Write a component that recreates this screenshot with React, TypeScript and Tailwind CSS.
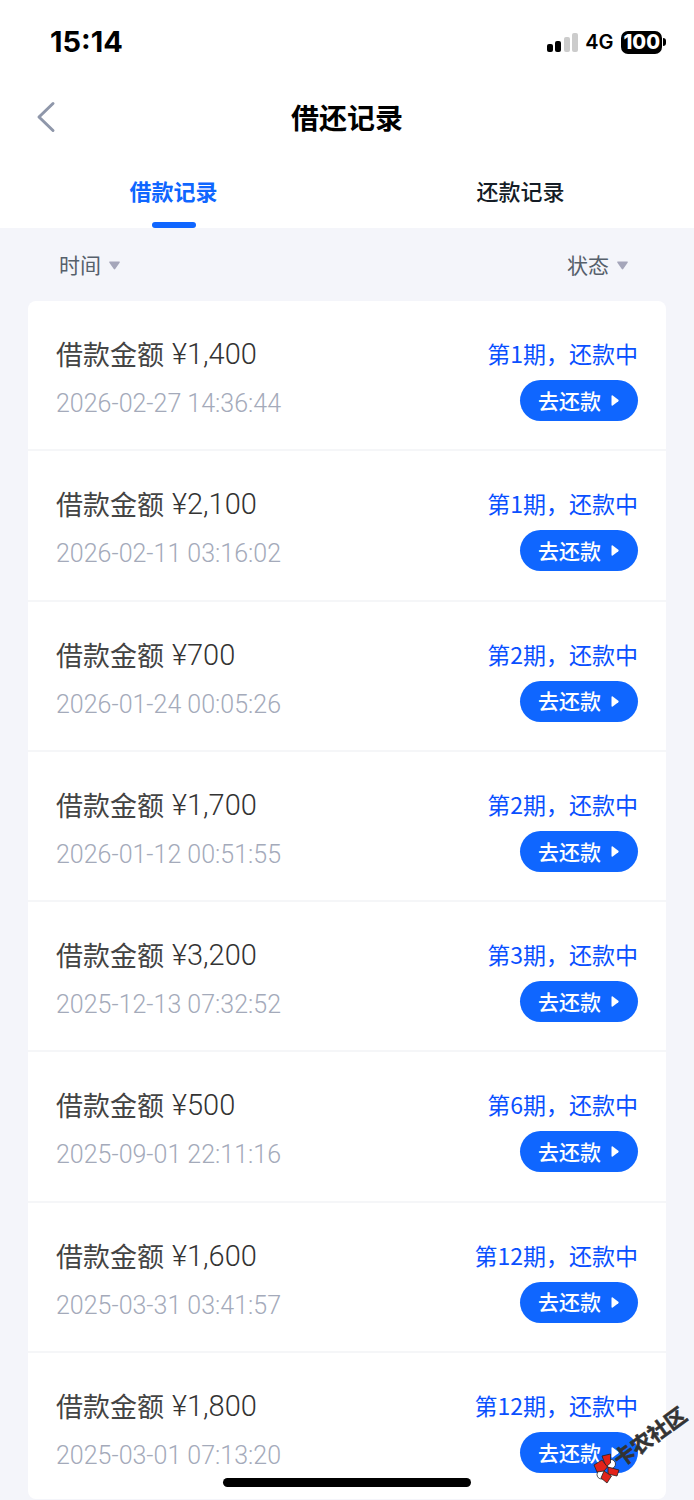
import React from "react";

type LoanRecord = {
  amount: string;
  time: string;
  period: number;
};

const records: LoanRecord[] = [
  { amount: "1,400", time: "2026-02-27 14:36:44", period: 1 },
  { amount: "2,100", time: "2026-02-11 03:16:02", period: 1 },
  { amount: "700", time: "2026-01-24 00:05:26", period: 2 },
  { amount: "1,700", time: "2026-01-12 00:51:55", period: 2 },
  { amount: "3,200", time: "2025-12-13 07:32:52", period: 3 },
  { amount: "500", time: "2025-09-01 22:11:16", period: 6 },
  { amount: "1,600", time: "2025-03-31 03:41:57", period: 12 },
  { amount: "1,800", time: "2025-03-01 07:13:20", period: 12 },
];

const StatusBar: React.FC = () => {
  return (
    <div className="flex h-[84px] items-center justify-between pr-7 pl-[50px] font-['Inter',sans-serif] text-black">
      <span className="text-[29px] font-bold">15:14</span>
      <div className="flex items-center">
        <svg width="32" height="20" viewBox="0 0 32 20" aria-hidden="true">
          <rect x="0" y="12" width="6" height="8" rx="2" fill="#000" />
          <rect x="8" y="9" width="6" height="11" rx="2" fill="#000" />
          <rect x="17" y="5" width="6" height="15" rx="2" fill="#ccc" />
          <rect x="25" y="1" width="6" height="19" rx="2" fill="#ccc" />
        </svg>
        <span className="ml-1.5 text-xl font-semibold">4G</span>
        <span className="ml-2 rounded-[7px] bg-black px-0.5 text-xl leading-[23px] font-extrabold text-white">100</span>
        <span className="ml-px h-2 w-[3px] rounded-r-full bg-black" />
      </div>
    </div>
  );
};

const Header: React.FC = () => {
  return (
    <header className="grid h-[66px] grid-cols-[1fr_auto_1fr] items-center px-7">
      <button type="button" aria-label="返回" className="flex h-11 w-9 items-center pl-2">
        <svg width="20" height="32" viewBox="0 0 20 32" fill="none" aria-hidden="true">
          <path d="M17 2.500 3 16l14 13.500" stroke="#8f97aa" strokeWidth="3" strokeLinecap="round" strokeLinejoin="round" />
        </svg>
      </button>
      <h1 className="text-[28px] font-bold text-black">借还记录</h1>
    </header>
  );
};

const Tabs: React.FC = () => {
  return (
    <div role="tablist" className="grid h-[78px] grid-cols-2 text-[22px]">
      <button type="button" role="tab" aria-selected="true" className="flex flex-col items-center justify-between pt-6 font-bold text-[#0f66ff]">
        <span className="leading-8">借款记录</span>
        <span className="h-1.5 w-11 rounded-full bg-[#0f66ff]" />
      </button>
      <button type="button" role="tab" aria-selected="false" className="flex flex-col items-center pt-6 font-medium text-[#141c26]">
        <span className="leading-8">还款记录</span>
      </button>
    </div>
  );
};

const FilterButton: React.FC<{ label: string }> = ({ label }) => {
  return (
    <button type="button" className="flex items-center gap-2 text-[21px] text-[#56606b]">
      {label}
      <svg className="mt-0.5" width="11" height="9" viewBox="0 0 11 9" aria-hidden="true">
        <path d="M1 .5h9c.8 0 1 .6.6 1.200L6.200 8c-.4.600-1 .600-1.400 0L.4 1.700C0 1.100.2.500 1 .500Z" fill="#a5a6ba" />
      </svg>
    </button>
  );
};

const RecordRow: React.FC<{ record: LoanRecord }> = ({ record }) => {
  return (
    <li className="flex flex-1 items-start justify-between border-b-2 border-[#f5f6f8] px-7 pt-[35px] pb-[27px] last:flex-none last:border-b-0 last:pb-[26px]">
      <div>
        <p className="flex items-center gap-2 text-[27px] leading-9 text-[#444]">
          <span>借款金额</span>
          <span className="font-['Roboto','Noto_Sans_CJK_SC',sans-serif] text-[29px] font-light text-[#333]">¥{record.amount}</span>
        </p>
        <time className="mt-4 block font-['Roboto',sans-serif] text-[25px] leading-8 font-light text-[#a4aaba]">{record.time}</time>
      </div>
      <div className="flex flex-col items-end">
        <p className="text-[23px] leading-[34px] text-[#0a50ff]">第{record.period}期，还款中</p>
        <button type="button" className="mt-2.5 flex h-[41px] items-center gap-2.5 rounded-full bg-[#0f66ff] pr-[19px] pl-[18px] text-[21px] font-medium text-white">
          去还款
          <svg width="8" height="11" viewBox="0 0 8 11" aria-hidden="true">
            <path d="M.500 1c0-.8.600-1 1.200-.600l5.600 4.400c.5.400.5 1 0 1.400l-5.600 4.400C1.100 11 .500 10.800.500 10Z" fill="#fff" />
          </svg>
        </button>
      </div>
    </li>
  );
};

const Watermark: React.FC = () => {
  return (
    <svg className="absolute right-1 bottom-4 h-20 w-[100px] overflow-visible" viewBox="0 0 100 80" aria-hidden="true">
      <g stroke="#222" strokeWidth="0.8">
        <circle cx="21" cy="60" r="4.500" fill="#fff" />
        <circle cx="11.500" cy="70.500" r="4.500" fill="#fff" />
        <path d="M12 52 20.500 50 20.500 59 16 63Z" fill="#e2231a" />
        <path d="M4 61 12 56 17.500 63 14 67 7 68Z" fill="#e2231a" />
        <path d="M18 63 29 66 27 72 18 70Z" fill="#e2231a" />
        <path d="M14 67 21.500 72 17 79 11 74Z" fill="#e2231a" />
      </g>
      <text
        transform="translate(17 64) rotate(-36)"
        x="11"
        y="8"
        fontSize="21"
        fontWeight="700"
        fill="#333"
        stroke="#333"
        strokeWidth="0.6"
      >
        卡农社区
      </text>
    </svg>
  );
};

const App: React.FC = () => {
  return (
    <div lang="zh-CN" className="relative flex min-h-screen flex-col bg-[#f4f5fa] font-['Noto_Sans_CJK_SC',sans-serif]">
      <div className="bg-white">
        <StatusBar />
        <Header />
        <Tabs />
      </div>
      <main className="flex flex-1 flex-col px-7 pb-px">
        <div className="flex h-[73px] items-center justify-between pr-[38px] pl-[31px]">
          <FilterButton label="时间" />
          <FilterButton label="状态" />
        </div>
        <ul className="flex flex-1 flex-col rounded-lg bg-white">
          {records.map((record) => (
            <RecordRow key={record.time} record={record} />
          ))}
        </ul>
      </main>
      <Watermark />
      <div className="absolute bottom-[13px] left-1/2 h-[9px] w-[248px] -translate-x-1/2 rounded-full bg-black" />
    </div>
  );
};

export default App;
